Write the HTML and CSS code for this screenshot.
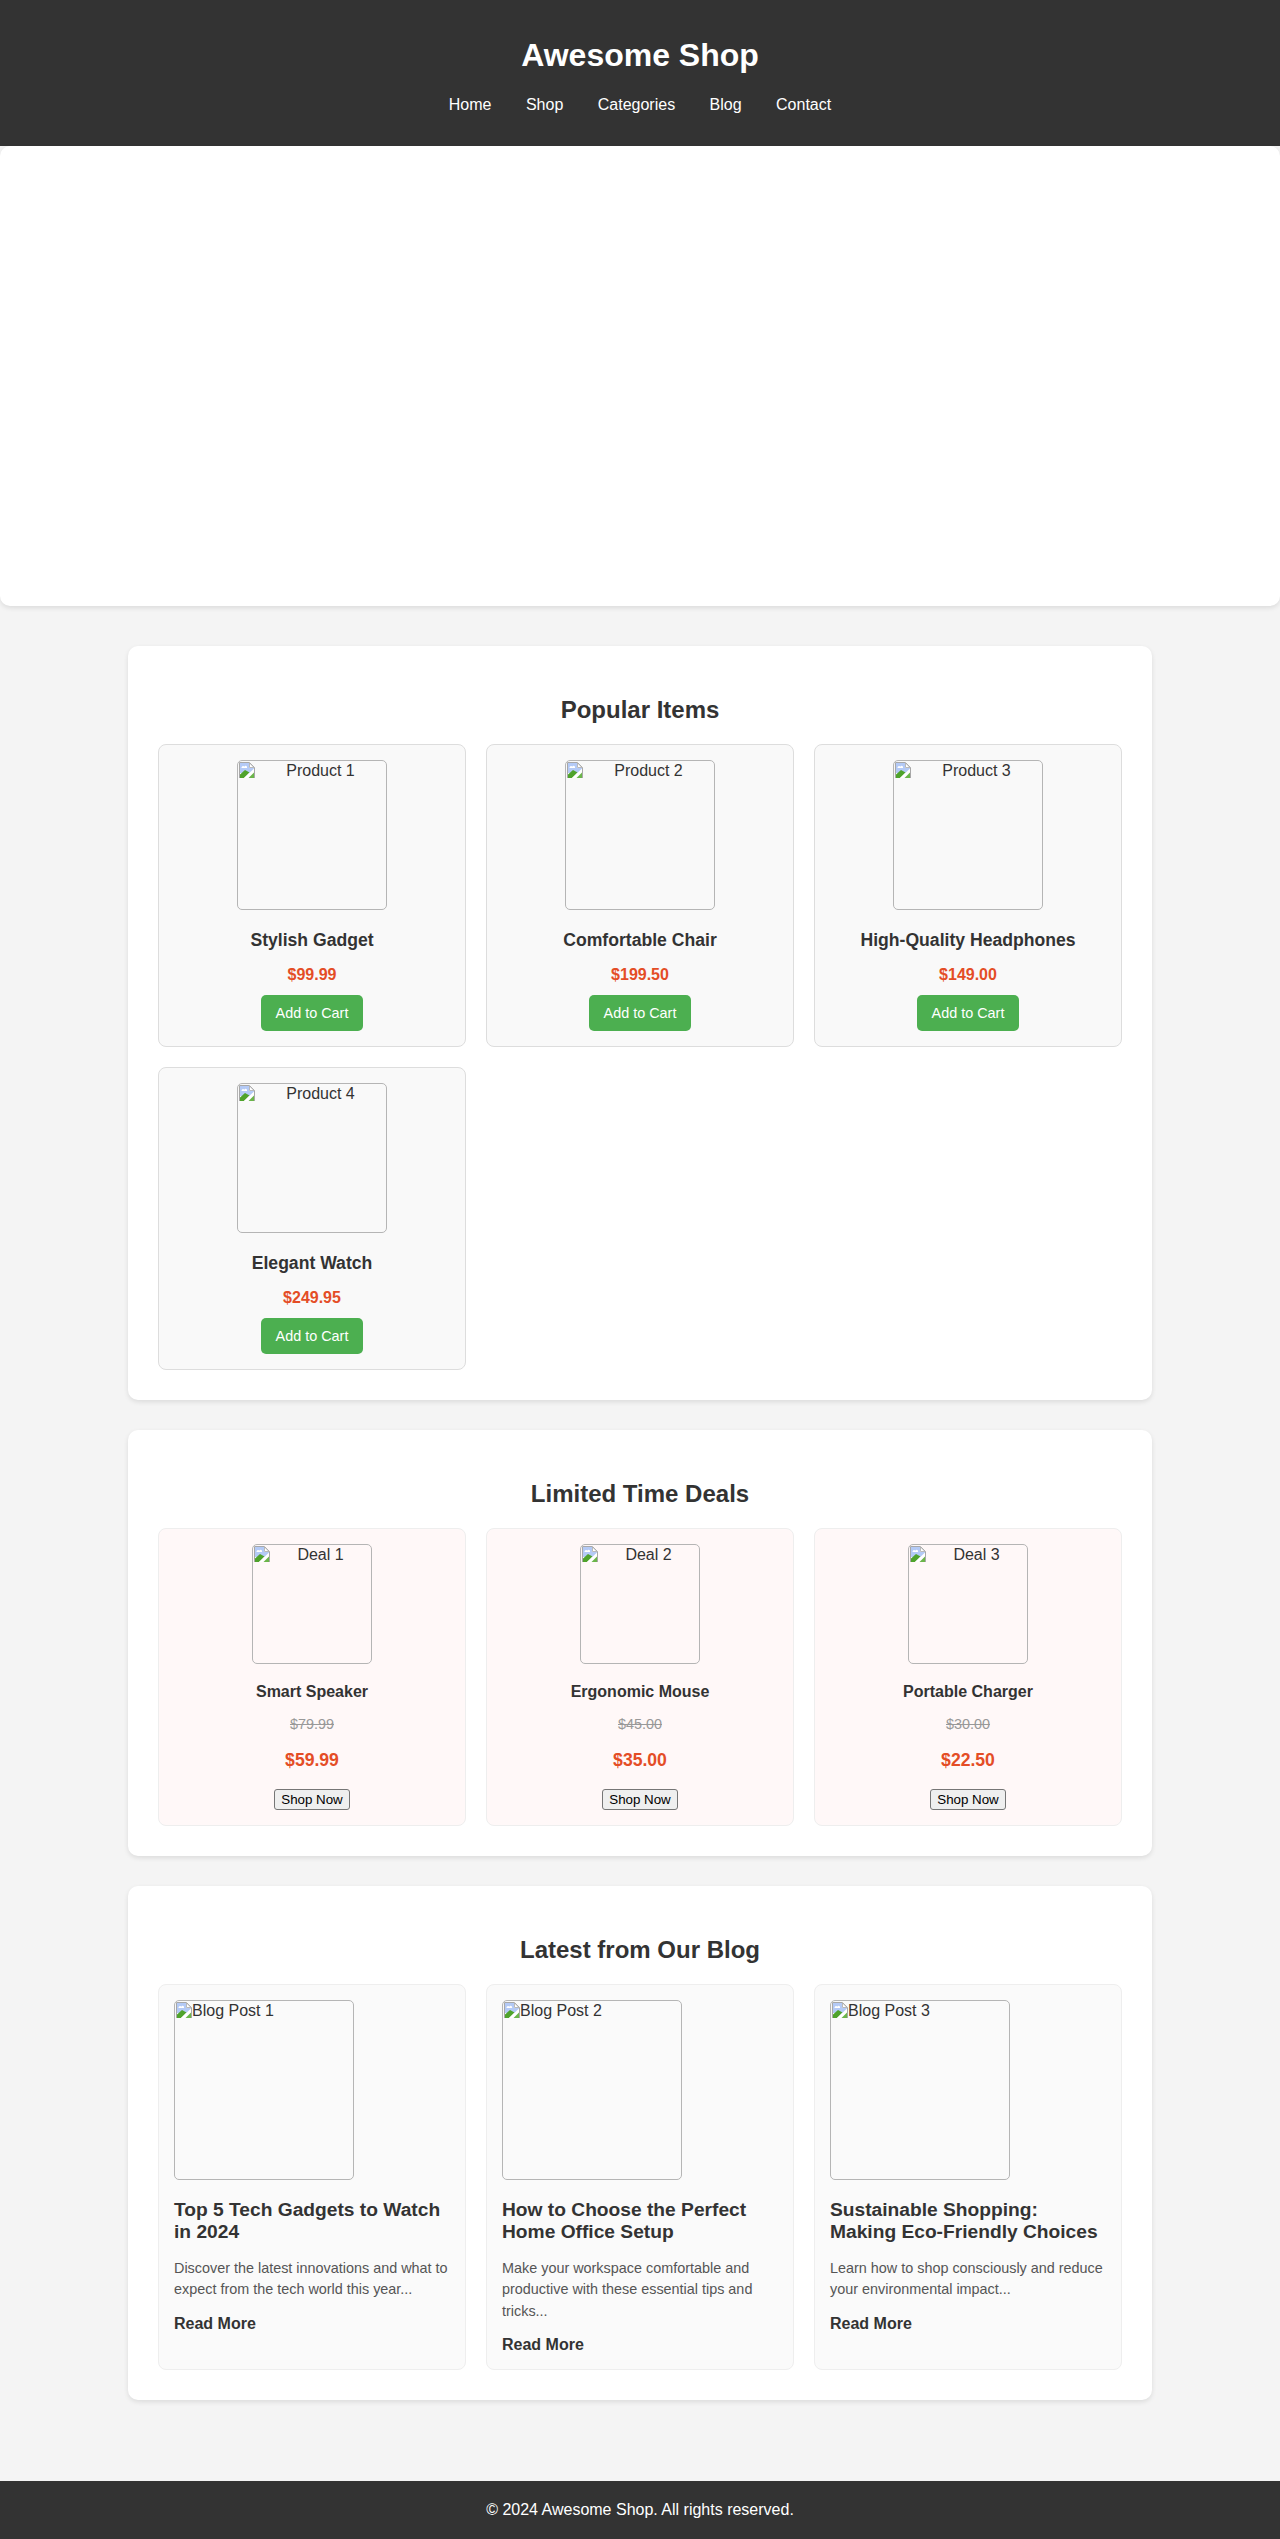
FILE: index.html
```html
<!DOCTYPE html>
<html lang="en">
<head>
<meta charset="utf-8">
<title>Awesome Shop</title>
<link rel="stylesheet" href="styles.css">
</head>
<body>
<svg class="defs" width="0" height="0" aria-hidden="true">
  <symbol id="broken" viewBox="0 0 16 16">
    <path d="M.5 16V.5H10.500L15.500 5.500V16" fill="#fff" stroke="#a8a8a8"/>
    <path d="M1 1H10V6H15V11H1Z" fill="#b4caf6"/>
    <path d="M10.500 1V5.500H15Z" fill="#fff" stroke="#a8a8a8" stroke-width=".8"/>
    <path d="M2.500 6a1.600 1.600 0 0 1 2.800-1.300A1.500 1.500 0 0 1 8 6Z" fill="#fff"/>
    <path d="M1 16V12.500L6 8 10.500 10.500 5 16Z" fill="#4fa32c"/>
    <path d="M5 16 15 6.500V10.500L9.500 16Z" fill="#fff"/>
    <path d="M9.500 16 15 10.500V16Z" fill="#6bb54a"/>
  </symbol>
</svg>
<header class="site-header">
  <h1 class="site-title">Awesome Shop</h1>
  <nav class="site-nav">
    <a href="#">Home</a>
    <a href="#">Shop</a>
    <a href="#">Categories</a>
    <a href="#">Blog</a>
    <a href="#">Contact</a>
  </nav>
</header>
<div class="hero"></div>
<main class="content">
  <section class="panel">
    <h2 class="panel-title">Popular Items</h2>
    <div class="grid">
      <article class="card product">
        <div class="thumb thumb-150"><svg class="broken"><use href="#broken"/></svg>Product 1</div>
        <h3 class="product-name">Stylish Gadget</h3>
        <p class="price">$99.99</p>
        <button class="cart-btn">Add to Cart</button>
      </article>
      <article class="card product">
        <div class="thumb thumb-150"><svg class="broken"><use href="#broken"/></svg>Product 2</div>
        <h3 class="product-name">Comfortable Chair</h3>
        <p class="price">$199.50</p>
        <button class="cart-btn">Add to Cart</button>
      </article>
      <article class="card product">
        <div class="thumb thumb-150"><svg class="broken"><use href="#broken"/></svg>Product 3</div>
        <h3 class="product-name">High-Quality Headphones</h3>
        <p class="price">$149.00</p>
        <button class="cart-btn">Add to Cart</button>
      </article>
      <article class="card product">
        <div class="thumb thumb-150"><svg class="broken"><use href="#broken"/></svg>Product 4</div>
        <h3 class="product-name">Elegant Watch</h3>
        <p class="price">$249.95</p>
        <button class="cart-btn">Add to Cart</button>
      </article>
    </div>
  </section>
  <section class="panel">
    <h2 class="panel-title">Limited Time Deals</h2>
    <div class="grid">
      <article class="card deal">
        <div class="thumb thumb-120"><svg class="broken"><use href="#broken"/></svg>Deal 1</div>
        <h3 class="deal-name">Smart Speaker</h3>
        <p class="old-price">$79.99</p>
        <p class="deal-price">$59.99</p>
        <button class="shop-btn">Shop Now</button>
      </article>
      <article class="card deal">
        <div class="thumb thumb-120"><svg class="broken"><use href="#broken"/></svg>Deal 2</div>
        <h3 class="deal-name">Ergonomic Mouse</h3>
        <p class="old-price">$45.00</p>
        <p class="deal-price">$35.00</p>
        <button class="shop-btn">Shop Now</button>
      </article>
      <article class="card deal">
        <div class="thumb thumb-120"><svg class="broken"><use href="#broken"/></svg>Deal 3</div>
        <h3 class="deal-name">Portable Charger</h3>
        <p class="old-price">$30.00</p>
        <p class="deal-price">$22.50</p>
        <button class="shop-btn">Shop Now</button>
      </article>
    </div>
  </section>
  <section class="panel">
    <h2 class="panel-title">Latest from Our Blog</h2>
    <div class="grid">
      <article class="card blog">
        <div class="thumb thumb-180"><svg class="broken"><use href="#broken"/></svg>Blog Post 1</div>
        <h3 class="blog-title">Top 5 Tech Gadgets to Watch in 2024</h3>
        <p class="blog-text">Discover the latest innovations and what to expect from the tech world this year...</p>
        <a class="read-more" href="#">Read More</a>
      </article>
      <article class="card blog">
        <div class="thumb thumb-180"><svg class="broken"><use href="#broken"/></svg>Blog Post 2</div>
        <h3 class="blog-title">How to Choose the Perfect Home Office Setup</h3>
        <p class="blog-text">Make your workspace comfortable and productive with these essential tips and tricks...</p>
        <a class="read-more" href="#">Read More</a>
      </article>
      <article class="card blog">
        <div class="thumb thumb-180"><svg class="broken"><use href="#broken"/></svg>Blog Post 3</div>
        <h3 class="blog-title">Sustainable Shopping: Making Eco-Friendly Choices</h3>
        <p class="blog-text">Learn how to shop consciously and reduce your environmental impact...</p>
        <a class="read-more" href="#">Read More</a>
      </article>
    </div>
  </section>
</main>
<footer class="site-footer">© 2024 Awesome Shop. All rights reserved.</footer>
</body>
</html>
```
FILE: styles.css
```css
* { box-sizing: border-box; }
html, body { margin: 0; padding: 0; }
body {
  background: #f4f4f4;
  color: #333;
  font-family: "Liberation Sans", Arial, sans-serif;
  font-size: 16px;
  line-height: 1.15;
}
.defs { position: absolute; }
.site-header {
  background: #333;
  color: #fff;
  height: 146px;
  padding: 37px 0 0;
  text-align: center;
}
.site-title { margin: 0 0 22px; font-size: 32px; line-height: 37px; font-weight: 700; }
.site-nav { display: flex; justify-content: center; gap: 34.45px; line-height: 18px; }
.site-nav a { color: #fff; text-decoration: none; }
.hero {
  background: #fff;
  height: 460px;
  border-radius: 10px;
  box-shadow: 0 2px 5px rgba(0, 0, 0, .1);
}
.content {
  width: 1024px;
  margin: 40px auto 80.7px;
  display: flex;
  flex-direction: column;
  gap: 30px;
}
.panel {
  background: #fff;
  border-radius: 10px;
  padding: 30px;
  box-shadow: 0 2px 5px rgba(0, 0, 0, .1);
}
.panel-title { margin: 20px 0; font-size: 24px; line-height: 28px; text-align: center; }
.grid { display: grid; grid-template-columns: repeat(3, 1fr); gap: 20px; }
.card { border: 1px solid #ddd; border-radius: 8px; padding: 15px; text-align: center; }
.product { background: #f9f9f9; }
.deal { background: #fff8f8; border-color: #eee; }
.blog { background: #fafafa; border-color: #eee; text-align: left; }
.thumb { border: 1px solid #b5b5b5; border-radius: 5px; margin: 0 auto; padding-top: 1px; overflow: hidden; line-height: 18px; }
.thumb-150 { width: 150px; height: 150px; }
.thumb-120 { width: 120px; height: 120px; }
.thumb-180 { width: 180px; height: 180px; margin: 0; }
.broken { float: left; width: 16px; height: 16px; margin-left: 1px; }
.product-name { margin: 20px 0 16px; font-size: 17.6px; line-height: 20px; }
.price { margin: 0 0 11px; color: #e44d26; font-weight: 700; line-height: 18px; }
.cart-btn {
  display: inline-block;
  vertical-align: top;
  height: 36px;
  padding: 0 15px;
  border: 0;
  border-radius: 5px;
  background: #4caf50;
  color: #fff;
  font: 14.4px "Liberation Sans", Arial, sans-serif;
}
.deal-name { margin: 19px 0 15px; font-size: 16px; line-height: 18px; }
.old-price { margin: 0 0 18px; color: #999; font-size: 14.4px; line-height: 16px; text-decoration: line-through; }
.deal-price { margin: 0 0 18.5px; color: #e44d26; font-size: 17.6px; font-weight: 700; line-height: 20px; }
.shop-btn {
  display: inline-block;
  vertical-align: top;
  height: 21px;
  padding: 0 6px;
  border: 1px solid #767676;
  border-radius: 3px;
  background: #efefef;
  color: #000;
  font: 13.33px "Liberation Sans", Arial, sans-serif;
}
.blog-title { margin: 19px 0 15px; font-size: 19.2px; line-height: 22px; }
.blog-text { margin: 0 0 14px; color: #555; font-size: 14.4px; line-height: 21.6px; }
.read-more { display: block; color: #333; font-weight: 700; line-height: 18px; text-decoration: none; }
.site-footer { background: #333; color: #fff; height: 58px; padding-top: 20px; line-height: 18px; text-align: center; }
```
